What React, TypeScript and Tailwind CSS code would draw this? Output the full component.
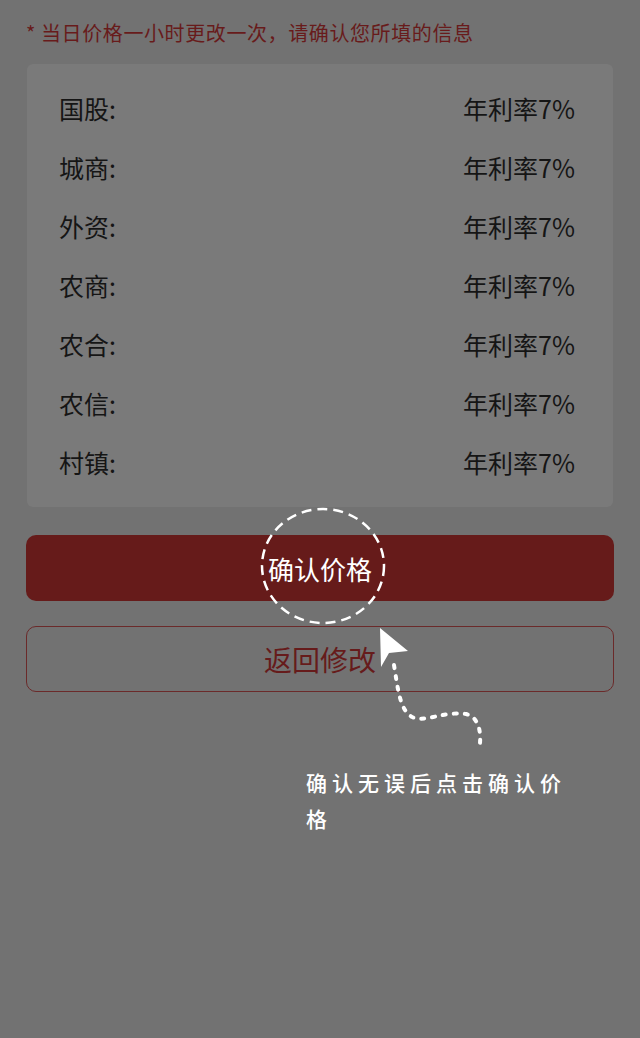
import React from "react";

const rates = [
  { name: "国股", rate: "年利率7%" },
  { name: "城商", rate: "年利率7%" },
  { name: "外资", rate: "年利率7%" },
  { name: "农商", rate: "年利率7%" },
  { name: "农合", rate: "年利率7%" },
  { name: "农信", rate: "年利率7%" },
  { name: "村镇", rate: "年利率7%" },
];

const App = () => {
  return (
    <div
      className="relative w-[640px] h-[1038px] bg-[#727272] overflow-hidden"
      style={{ fontFamily: '"Noto Sans CJK SC", "Noto Sans", sans-serif' }}
    >
      <p className="pt-[19px] pl-[26px] text-[20px] leading-[28px] tracking-[0.6px] text-[#681b1b]">
        * 当日价格一小时更改一次，请确认您所填的信息
      </p>

      <div className="mx-[27px] mt-[17px] rounded-md bg-[#7a7a7a] py-[15px] pl-[32px] pr-[38px]">
        {rates.map((r) => (
          <div key={r.name} className="flex h-[59px] items-center justify-between text-[25px] text-[#151515]">
            <span>{r.name}:</span>
            <span>{r.rate}</span>
          </div>
        ))}
      </div>

      <div className="relative mx-[26px] mt-[28px]">
        <button className="flex h-[66px] w-full items-center justify-center rounded-[10px] bg-[#661b1a] text-[26px] text-white">
          确认价格
        </button>
        <button className="mt-[25px] flex h-[66px] w-full items-center justify-center rounded-[10px] border border-[#6b2a2a] text-[28px] text-[#661b1b]">
          返回修改
        </button>

        {/* guide overlay */}
        <svg
          className="absolute left-0 top-[-30px] pointer-events-none"
          width="588"
          height="240"
          viewBox="0 0 588 240"
        >
          <ellipse
            cx="297"
            cy="61"
            rx="61"
            ry="57"
            fill="none"
            stroke="white"
            strokeWidth="2.5"
            strokeDasharray="10 6"
          />
          <path d="M354 123 L355 162 L363 148 L382 146 Z" fill="white" />
          <path
            d="M368 160 C372 185 374 205 386 212 C400 218 415 206 440 209 C452 212 455 225 454 238"
            fill="none"
            stroke="white"
            strokeWidth="4"
            strokeLinecap="round"
            strokeDasharray="3 8"
          />
        </svg>
      </div>

      <p className="ml-[306px] mt-[72px] w-[270px] text-[21px] font-medium leading-[36px] tracking-[5px] text-white">
        确认无误后点击确认价格
      </p>
    </div>
  );
};

export default App;
